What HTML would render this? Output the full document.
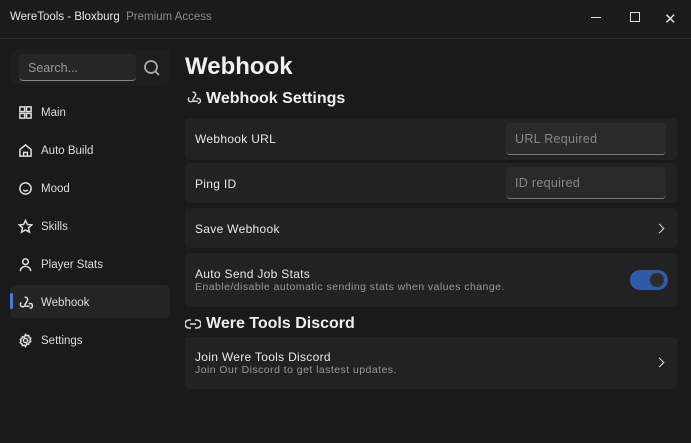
<!DOCTYPE html><html><head><style>
body{margin:0;width:691px;height:443px;background:#1a1a1a;font-family:"Liberation Sans",sans-serif;color:#e6e6e6;position:relative;overflow:hidden}
.a{position:absolute}
.tb{left:0;top:0;width:691px;height:38px;border-bottom:1px solid #2e2e2e;background:#1b1b1b}
.nav{left:18px;font-size:11.5px;color:#ddd;display:flex;align-items:center;gap:8px}
.nav svg{width:15px;height:15px;fill:none;stroke:#ddd;stroke-width:1.6}
.card{left:185px;width:492px;background:#222;border-radius:4px}
.lbl{font-size:12px;letter-spacing:0.3px;color:#e8e8e8;position:absolute;left:10px}
.sub{font-size:10.5px;letter-spacing:0.45px;color:#999;position:absolute;left:10px}
.inp{position:absolute;left:321px;width:160px;height:32px;background:#2a2a2a;border-radius:4px;border-bottom:1px solid #777;box-sizing:border-box;font-size:12.5px;letter-spacing:0.3px;color:#888;padding:9px 9px}
.chev{position:absolute;right:14px;width:6px;height:6px;border-right:1.6px solid #ddd;border-top:1.6px solid #ddd;transform:rotate(45deg)}
</style></head><body>
<div class="a tb"></div>
<div class="a" style="left:10px;top:11px;font-size:11.5px;color:#e6e6e6">WereTools - Bloxburg <span style="color:#8a8a8a">&nbsp;Premium Access</span></div>
<div class="a" style="left:591px;top:17px;width:10px;height:1px;background:#ddd"></div>
<div class="a" style="left:630px;top:12px;width:8px;height:8px;border:1.3px solid #ddd"></div>
<div class="a" style="left:664px;top:10px;font-size:15px;color:#ddd">✕</div>
<div class="a" style="left:11px;top:50px;width:159px;height:35px;background:#1e1e1e;border-radius:5px"></div>
<div class="a" style="left:19px;top:54px;width:117px;height:27px;background:#262626;border-radius:4px;border-bottom:1px solid #888;box-sizing:border-box;font-size:12.5px;color:#999;padding:7px 9px">Search...</div>
<svg class="a" style="left:143px;top:59px" width="18" height="18" viewBox="0 0 18 18" fill="none" stroke="#aaa" stroke-width="1.8"><circle cx="8" cy="8" r="6"/><path d="M12.5 12.5L16 16"/></svg>
<div class="a" style="left:10px;top:285px;width:160px;height:33px;background:#242424;border-radius:5px"></div>
<div class="a" style="left:10px;top:293px;width:3px;height:16px;background:#3d7cf5;border-radius:2px"></div>
<div class="a nav" style="top:105px"><svg viewBox="0 0 16 16"><rect x="2" y="2" width="5" height="5"/><rect x="9" y="2" width="5" height="5"/><rect x="2" y="9" width="5" height="5"/><rect x="9" y="9" width="5" height="5"/></svg>Main</div>
<div class="a nav" style="top:143px"><svg viewBox="0 0 16 16"><path d="M2 7L8 2l6 5v7H2z M6 14v-4h4v4"/></svg>Auto Build</div>
<div class="a nav" style="top:181px"><svg viewBox="0 0 16 16"><circle cx="8" cy="8" r="6"/><path d="M5.5 9.5c1.5 1.5 3.5 1.5 5 0"/></svg>Mood</div>
<div class="a nav" style="top:219px"><svg viewBox="0 0 16 16"><path d="M8 1.5l2 4.3 4.6.5-3.4 3.1 1 4.6L8 11.7 3.8 14l1-4.6L1.4 6.3 6 5.8z"/></svg>Skills</div>
<div class="a nav" style="top:257px"><svg viewBox="0 0 16 16"><circle cx="8" cy="5" r="3"/><path d="M2.5 15c0-3 2.5-5 5.5-5s5.5 2 5.5 5"/></svg>Player Stats</div>
<div class="a nav" style="top:295px"><svg viewBox="0 0 16 16"><path d="M7 2.5a2.5 2.5 0 0 1 3 3.5L7 11M3.5 8a2.5 2.5 0 1 0 3 4h6M12.5 14a2.5 2.5 0 1 0-1-4.5"/></svg>Webhook</div>
<div class="a nav" style="top:333px"><svg viewBox="0 0 16 16"><circle cx="8" cy="8" r="2.3"/><path d="M8 1.5l1.3 1.5 2-.5.5 2 1.8 1-0.8 1.8.8 1.8-1.8 1-.5 2-2-.5L8 14.5 6.7 13l-2 .5-.5-2-1.8-1 .8-1.8-.8-1.8 1.8-1 .5-2 2 .5z"/></svg>Settings</div>
<div class="a" style="left:185px;top:53px;font-size:24px;font-weight:bold;color:#f0f0f0">Webhook</div>
<svg class="a" style="left:186px;top:90px" width="15" height="15" viewBox="0 0 16 16" fill="none" stroke="#ddd" stroke-width="1.5"><path d="M7 2.5a2.5 2.5 0 0 1 3 3.5L7 11M3.5 8a2.5 2.5 0 1 0 3 4h6M12.5 14a2.5 2.5 0 1 0-1-4.5"/></svg>
<div class="a" style="left:206px;top:90px;font-size:16px;font-weight:bold;color:#eee">Webhook Settings</div>
<div class="a card" style="top:118px;height:42px"><div class="lbl" style="top:14px">Webhook URL</div><div class="inp" style="top:5px">URL Required</div></div>
<div class="a card" style="top:163px;height:40px"><div class="lbl" style="top:14px">Ping ID</div><div class="inp" style="top:4px">ID required</div></div>
<div class="a card" style="top:208px;height:40px"><div class="lbl" style="top:14px">Save Webhook</div><div class="chev" style="top:17px"></div></div>
<div class="a card" style="top:253px;height:54px"><div class="lbl" style="top:14px">Auto Send Job Stats</div><div class="sub" style="top:28px">Enable/disable automatic sending stats when values change.</div>
<div style="position:absolute;left:445px;top:17px;width:38px;height:20px;border-radius:10px;background:#2f5aa8"><div style="position:absolute;right:4px;top:3px;width:14px;height:14px;border-radius:7px;background:#2b2b2b"></div></div></div>
<svg class="a" style="left:185px;top:318px" width="16" height="12" viewBox="0 0 16 12" fill="none" stroke="#ddd" stroke-width="1.6"><path d="M6 2H4a4 4 0 0 0 0 8h2M10 2h2a4 4 0 0 1 0 8h-2M5 6h6"/></svg>
<div class="a" style="left:206px;top:315px;font-size:16px;font-weight:bold;color:#eee">Were Tools Discord</div>
<div class="a card" style="top:337px;height:52px"><div class="lbl" style="top:13px">Join Were Tools Discord</div><div class="sub" style="top:27px">Join Our Discord to get lastest updates.</div><div class="chev" style="top:22px"></div></div>
</body></html>
